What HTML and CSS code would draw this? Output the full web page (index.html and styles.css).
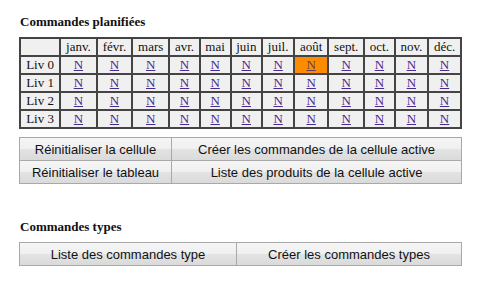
FILE: index.html
```html
<!DOCTYPE html>
<html lang="fr">
<head>
  <meta charset="UTF-8" />
  <title>Commandes planifiées</title>
  <link rel="stylesheet" href="styles.css">
</head>
<body>
  <div class="page">
    <h3 class="section-title">Commandes planifiées</h3>
    <table class="plan-table">
      <thead>
        <tr>
          <th></th>
          <th>janv.</th><th>févr.</th><th>mars</th><th>avr.</th><th>mai</th><th>juin</th>
          <th>juil.</th><th>août</th><th>sept.</th><th>oct.</th><th>nov.</th><th>déc.</th>
        </tr>
      </thead>
      <tbody>
        <tr>
          <th>Liv 0</th>
          <td><a href="#">N</a></td><td><a href="#">N</a></td><td><a href="#">N</a></td><td><a href="#">N</a></td>
          <td><a href="#">N</a></td><td><a href="#">N</a></td><td><a href="#">N</a></td><td class="active"><a href="#">N</a></td>
          <td><a href="#">N</a></td><td><a href="#">N</a></td><td><a href="#">N</a></td><td><a href="#">N</a></td>
        </tr>
        <tr>
          <th>Liv 1</th>
          <td><a href="#">N</a></td><td><a href="#">N</a></td><td><a href="#">N</a></td><td><a href="#">N</a></td>
          <td><a href="#">N</a></td><td><a href="#">N</a></td><td><a href="#">N</a></td><td><a href="#">N</a></td>
          <td><a href="#">N</a></td><td><a href="#">N</a></td><td><a href="#">N</a></td><td><a href="#">N</a></td>
        </tr>
        <tr>
          <th>Liv 2</th>
          <td><a href="#">N</a></td><td><a href="#">N</a></td><td><a href="#">N</a></td><td><a href="#">N</a></td>
          <td><a href="#">N</a></td><td><a href="#">N</a></td><td><a href="#">N</a></td><td><a href="#">N</a></td>
          <td><a href="#">N</a></td><td><a href="#">N</a></td><td><a href="#">N</a></td><td><a href="#">N</a></td>
        </tr>
        <tr>
          <th>Liv 3</th>
          <td><a href="#">N</a></td><td><a href="#">N</a></td><td><a href="#">N</a></td><td><a href="#">N</a></td>
          <td><a href="#">N</a></td><td><a href="#">N</a></td><td><a href="#">N</a></td><td><a href="#">N</a></td>
          <td><a href="#">N</a></td><td><a href="#">N</a></td><td><a href="#">N</a></td><td><a href="#">N</a></td>
        </tr>
      </tbody>
    </table>

    <div class="btn-grid cell-actions">
      <button>Réinitialiser la cellule</button>
      <button>Créer les commandes de la cellule active</button>
      <button>Réinitialiser le tableau</button>
      <button>Liste des produits de la cellule active</button>
    </div>

    <h3 class="section-title types-title">Commandes types</h3>
    <div class="btn-grid type-actions">
      <button>Liste des commandes type</button>
      <button>Créer les commandes types</button>
    </div>
  </div>
</body>
</html>
```

FILE: styles.css
```css
* { box-sizing: border-box; }
body { margin: 0; background: #ffffff; }
.page { width: 443px; margin-left: 19px; padding-top: 14px; }

.section-title {
  font-family: "Liberation Serif", "Times New Roman", serif;
  font-size: 13px; line-height: 15px; font-weight: bold;
  color: #111; margin: 0 0 0 1px;
}
.types-title { margin-top: 35px; }

.plan-table {
  width: 443px; margin-top: 8px;
  border-collapse: collapse;
  font-family: "Liberation Serif", "Times New Roman", serif;
  font-size: 13px; line-height: 16px; color: #111;
}
.plan-table th, .plan-table td {
  border: 2px solid #444;
  background: #f0f0f0;
  padding: 0 3px; height: 16px;
  text-align: center; font-weight: normal;
}
.plan-table a { color: #4b2a8f; text-decoration: underline; }
.plan-table td.active { background: #ff8c00; }
.plan-table td.active a { color: #6a3a5a; }

.btn-grid { display: grid; margin-top: 8px; }
.cell-actions { grid-template-columns: 153px 1fr; }
.type-actions { grid-template-columns: 218px 1fr; }
.btn-grid button {
  height: 24px; margin: 0; padding: 0;
  font-family: "Liberation Sans", Arial, sans-serif; font-size: 13px; color: #111;
  border: 1px solid #a9a9a9; border-radius: 0;
  background: linear-gradient(#f5f5f5, #f0f0f0 48%, #e3e3e3 52%, #dadada);
}
.btn-grid button:nth-child(even) { margin-left: -1px; }
.cell-actions button:nth-child(n+3) { margin-top: -1px; }
```
